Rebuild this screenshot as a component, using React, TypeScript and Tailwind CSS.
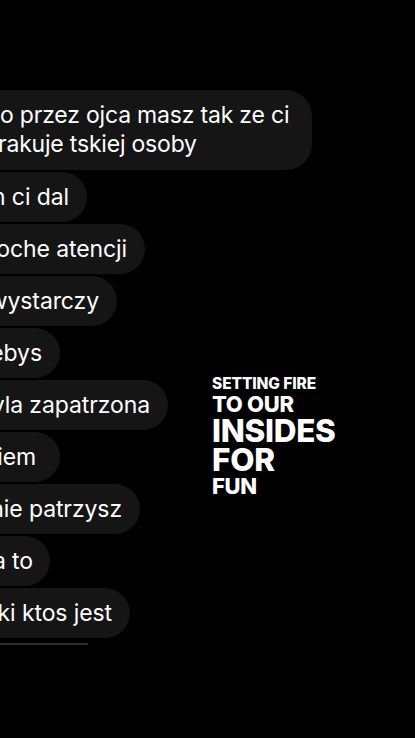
import React from 'react'

const rows = [
  { text: 'n ci dal', w: 'w-[87px]', pr: 'pr-[18px]' },
  { text: 'oche atencji', w: 'w-[145px]', pr: 'pr-[18px]' },
  { text: 'wystarczy', w: 'w-[117px]', pr: 'pr-[18px]' },
  { text: 'ebys', w: 'w-[60px]', pr: 'pr-[18px]' },
  { text: 'yla zapatrzona', w: 'w-[168px]', pr: 'pr-[18px]' },
  { text: 'iem', w: 'w-[60px]', pr: 'pr-[24px]' },
  { text: 'nie patrzysz', w: 'w-[140px]', pr: 'pr-[18px]' },
  { text: 'a to', w: 'w-[50px]', pr: 'pr-[17px]' },
  { text: 'ki ktos jest', w: 'w-[130px]', pr: 'pr-[18px]' },
]

export default function App() {
  return (
    <div
      className="relative w-[415px] h-[738px] bg-black overflow-hidden text-white"
      style={{ fontFamily: 'Inter, "Noto Sans", sans-serif' }}
    >
      <div className="flex flex-col items-start gap-[2px] pt-[90px]">
        <div className="w-[312px] h-[80px] bg-[#151515] rounded-r-[26px] pr-[20px] flex flex-col justify-center text-[23px] leading-[29px] tracking-[-0.2px]">
          <span className="whitespace-nowrap">o przez ojca masz tak ze ci</span>
          <span className="whitespace-nowrap -ml-[2px]">rakuje tskiej osoby</span>
        </div>
        {rows.map((r) => (
          <div
            key={r.text}
            className={`${r.w} ${r.pr} h-[50px] bg-[#151515] rounded-r-[25px] flex items-center justify-end text-[23px] tracking-[-0.1px]`}
          >
            <span className="whitespace-nowrap">{r.text}</span>
          </div>
        ))}
        <div className="w-[88px] h-[2px] bg-[#2e2e2e] mt-[3px]" />
      </div>

      {/* sticker over the story */}
      <div className="absolute left-[212px] top-[374px] flex flex-col font-extrabold uppercase tracking-[-0.3px]">
        <span className="text-[15.5px] leading-[19px] tracking-[-0.1px]">Setting fire</span>
        <span className="text-[22px] leading-[23px]">To our</span>
        <span className="text-[31.5px] leading-[30px]">Insides</span>
        <span className="text-[31.5px] leading-[28px]">For</span>
        <span className="text-[22px] leading-[24px]">Fun</span>
      </div>
    </div>
  )
}
